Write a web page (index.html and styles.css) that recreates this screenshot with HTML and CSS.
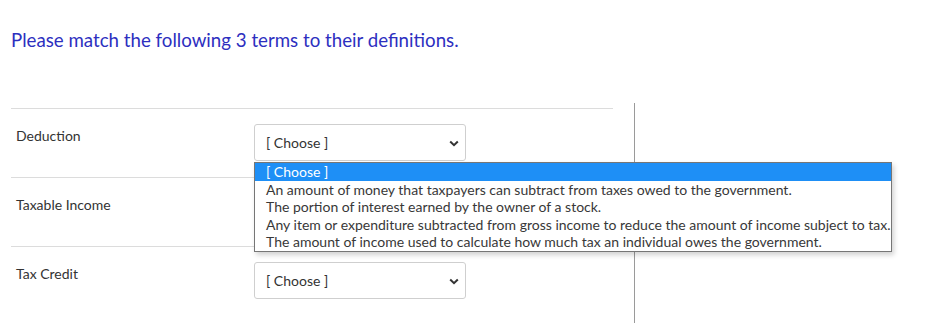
FILE: index.html
```html
<!DOCTYPE html>
<html lang="en">
<head>
<meta charset="utf-8">
<title>Matching question</title>
<link rel="stylesheet" href="styles.css">
</head>
<body>
<div class="page">
  <div class="question">
    <p class="prompt">Please match the following 3 terms to their definitions.</p>
  </div>
  <div class="answers">
    <div class="rows">
      <div class="row">
        <div class="term">Deduction</div>
        <div class="answer">
          <div class="select">
            <span class="value">[ Choose ]</span>
            <svg class="chev" width="10" height="7" viewBox="0 0 10 7"><path d="M1.2 1.5 L5 5.2 L8.8 1.5" fill="none" stroke="#333" stroke-width="2"/></svg>
          </div>
          <ul class="listbox">
            <li class="option selected">[ Choose ]</li>
            <li class="option">An amount of money that taxpayers can subtract from taxes owed to the government.</li>
            <li class="option">The portion of interest earned by the owner of a stock.</li>
            <li class="option">Any item or expenditure subtracted from gross income to reduce the amount of income subject to tax.</li>
            <li class="option">The amount of income used to calculate how much tax an individual owes the government.</li>
          </ul>
        </div>
      </div>
      <div class="row">
        <div class="term">Taxable Income</div>
        <div class="answer">
          <div class="select covered">
            <span class="value">[ Choose ]</span>
            <svg class="chev" width="10" height="7" viewBox="0 0 10 7"><path d="M1.2 1.5 L5 5.2 L8.8 1.5" fill="none" stroke="#333" stroke-width="2"/></svg>
          </div>
        </div>
      </div>
      <div class="row">
        <div class="term">Tax Credit</div>
        <div class="answer">
          <div class="select">
            <span class="value">[ Choose ]</span>
            <svg class="chev" width="10" height="7" viewBox="0 0 10 7"><path d="M1.2 1.5 L5 5.2 L8.8 1.5" fill="none" stroke="#333" stroke-width="2"/></svg>
          </div>
        </div>
      </div>
    </div>
  </div>
</div>
</body>
</html>
```
FILE: styles.css
```css
* { box-sizing: border-box; }
html, body { margin: 0; padding: 0; background: #fff; }
body {
  font-family: Lato, "Open Sans", "Liberation Sans", sans-serif;
  color: #333;
  overflow: hidden;
}
.page { width: 932px; height: 323px; }
.question {
  height: 103px;
  padding: 28px 0 0 11px;
}
.prompt {
  margin: 0;
  font-size: 18.7px;
  line-height: 24px;
  color: #2d2fbf;
}
.answers {
  width: 635px;
  height: 220px;
  border-right: 1px solid #9a9a9a;
  padding: 5px 0 0 11px;
}
.rows { width: 602px; }
.row {
  display: flex;
  height: 69px;
  border-top: 1px solid #dcdcdc;
}
.term {
  width: 243px;
  padding: 17px 0 0 5px;
  font-size: 14px;
  line-height: 20px;
  color: #333;
}
.answer {
  position: relative;
  padding-top: 15px;
}
.select {
  width: 212px;
  height: 37px;
  border: 1px solid #cfcfcf;
  border-radius: 3px;
  display: flex;
  align-items: center;
  justify-content: space-between;
  padding: 0 6px 0 11px;
  font-size: 14px;
  color: #333;
  background: #fff;
}
.select.covered .value { visibility: hidden; }
.chev { display: block; margin-top: 1px; }
.listbox {
  position: absolute;
  top: 53px;
  left: 0;
  width: 638px;
  margin: 0;
  padding: 0;
  list-style: none;
  border: 1px solid #767676;
  background: #fff;
  box-shadow: 2px 3px 5px rgba(0,0,0,0.18);
  z-index: 2;
}
.option {
  padding-left: 11px;
  font-size: 14px;
  line-height: 17.6px;
  height: 17.6px;
  white-space: nowrap;
  color: #383838;
}
.option.selected {
  background: #1e8ff6;
  color: #fff;
}
```
